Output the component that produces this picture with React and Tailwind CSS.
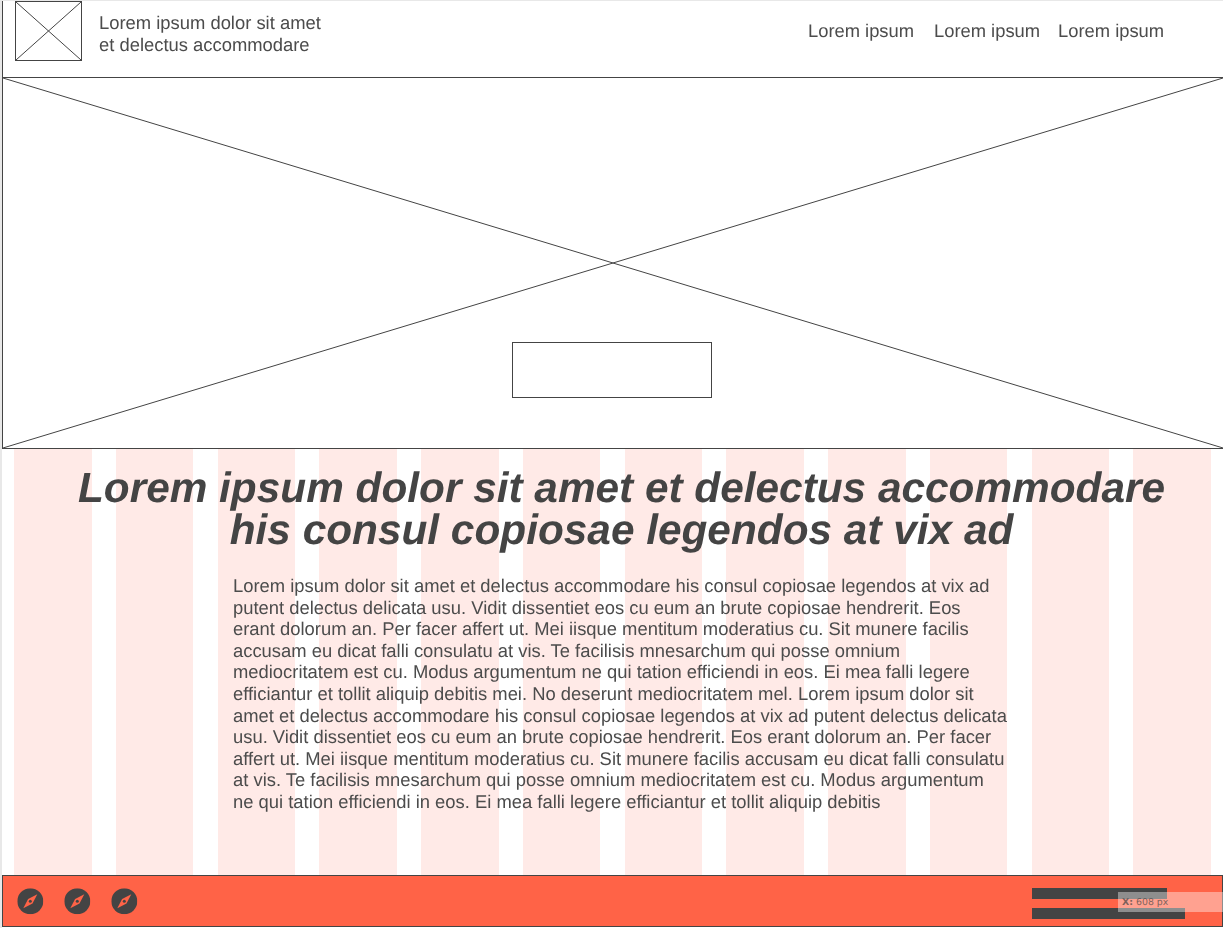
const Cross = ({ className }) => (
  <svg className={className} viewBox="0 0 100 100" preserveAspectRatio="none" aria-hidden="true">
    <line x1="0" y1="0" x2="100" y2="100" stroke="#444" strokeWidth="1" vectorEffect="non-scaling-stroke" />
    <line x1="100" y1="0" x2="0" y2="100" stroke="#444" strokeWidth="1" vectorEffect="non-scaling-stroke" />
  </svg>
);

const Compass = () => (
  <svg width="26" height="26" viewBox="0 0 26 26" aria-hidden="true">
    <circle cx="13" cy="13" r="13" fill="#444444" />
    <path d="M20 6 L15.2 15.2 L6 20 L10.8 10.8 Z" fill="#ff6347" />
    <circle cx="13" cy="13" r="1.5" fill="#444444" />
  </svg>
);

const body =
  "Lorem ipsum dolor sit amet et delectus accommodare his consul copiosae legendos at vix ad putent delectus delicata usu. Vidit dissentiet eos cu eum an brute copiosae hendrerit. Eos erant dolorum an. Per facer affert ut. Mei iisque mentitum moderatius cu. Sit munere facilis accusam eu dicat falli consulatu at vis. Te facilisis mnesarchum qui posse omnium mediocritatem est cu. Modus argumentum ne qui tation efficiendi in eos. Ei mea falli legere efficiantur et tollit aliquip debitis mei. No deserunt mediocritatem mel. Lorem ipsum dolor sit amet et delectus accommodare his consul copiosae legendos at vix ad putent delectus delicata usu. Vidit dissentiet eos cu eum an brute copiosae hendrerit. Eos erant dolorum an. Per facer affert ut. Mei iisque mentitum moderatius cu. Sit munere facilis accusam eu dicat falli consulatu at vis. Te facilisis mnesarchum qui posse omnium mediocritatem est cu. Modus argumentum ne qui tation efficiendi in eos. Ei mea falli legere efficiantur et tollit aliquip debitis";

export default function App() {
  return (
    <div className="relative h-[928px] w-[1223px] overflow-hidden bg-white pl-[2px] pt-px text-[#444444] [text-rendering:geometricPrecision] font-['Liberation_Sans',Arial,sans-serif]">
      <div className="absolute left-0 top-0 h-full w-[2px] bg-[#e8e8e8]" />
      <div className="absolute left-0 top-0 h-px w-full bg-[#e8e8e8]" />

      <header className="flex h-[77px] items-start border-b border-l border-[#444444] pl-3">
        <Cross className="h-[60px] w-[67px] border border-[#444444]" />
        <div className="ml-[17px] mt-[11px] text-[18.4px] leading-[22px] text-[#4c4c4c] will-change-transform">
          <p>Lorem ipsum dolor sit amet</p>
          <p>et delectus accommodare</p>
        </div>
        <nav className="ml-auto mr-[59px] mt-[19px] flex text-[18.35px] leading-[22px] text-[#4c4c4c] will-change-transform">
          <span>Lorem ipsum</span>
          <span className="ml-[20px]">Lorem ipsum</span>
          <span className="ml-[18px]">Lorem ipsum</span>
        </nav>
      </header>

      <section className="relative flex h-[371px] items-end justify-center border-b border-l border-[#444444] pb-[50px] pr-[2px]">
        <Cross className="absolute inset-0 h-full w-full" />
        <div className="relative h-[56px] w-[200px] border border-[#444444] bg-white" />
      </section>

      <main className="relative h-[426px] px-[12px]">
        <div className="absolute inset-y-0 left-[12.2px] grid w-[1196.6px] grid-cols-12 gap-x-[24.4px]">
          {Array.from({ length: 12 }, (_, i) => (
            <div key={i} className="bg-[#ffeae7]" />
          ))}
        </div>
        <div className="relative pt-[18px]">
          <h1 className="w-full pl-[18px] text-center text-[42.35px] font-bold italic leading-[42px] will-change-transform">
            Lorem ipsum dolor sit amet et delectus accommodare<br />his consul copiosae legendos at vix ad
          </h1>
          <p className="ml-[219px] mt-[24px] w-[774.5px] text-[18.4px] leading-[21.6px] text-[#4c4c4c] will-change-transform">{body}</p>
        </div>
      </main>

      <footer className="relative flex h-[52px] items-center border border-[#444444] bg-[#ff6347] pl-[14px]">
        <div className="flex translate-x-[0.3px] translate-y-[0.3px] gap-[21px]"><Compass /><Compass /><Compass /></div>
        <div className="ml-auto mr-[37px] mt-[4px] flex flex-col gap-[9px]">
          <div className="h-[11px] w-[135px] bg-[#444444]" />
          <div className="h-[11px] w-[153px] bg-[#444444]" />
        </div>
      </footer>

      <div className="absolute left-[1118px] top-[892px] flex h-[20px] w-[105px] items-center bg-white/40 pl-1 pt-[2px] text-[9.4px] text-[#444444]/70 font-['DejaVu_Sans',sans-serif]">
        <b>X:</b>&nbsp;608 px
      </div>
    </div>
  );
}
